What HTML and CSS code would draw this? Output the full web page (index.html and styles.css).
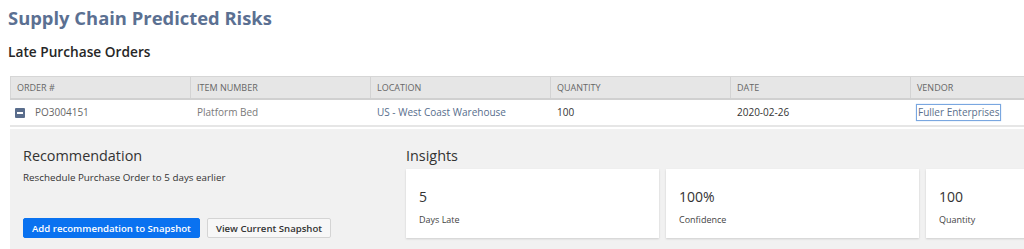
FILE: index.html
```html
<!DOCTYPE html>
<html lang="en">
<head>
    <meta charset="UTF-8">
    <title>Supply Chain Predicted Risks</title>
    <link rel="stylesheet" href="styles.css">
</head>
<body>
    <h1 class="page-title">Supply Chain Predicted Risks</h1>
    <h2 class="section-title">Late Purchase Orders</h2>
    <div class="orders">
        <div class="orders-row orders-head">
            <div class="cell">Order #</div>
            <div class="cell">Item Number</div>
            <div class="cell">Location</div>
            <div class="cell">Quantity</div>
            <div class="cell">Date</div>
            <div class="cell">Vendor</div>
        </div>
        <div class="orders-row orders-body">
            <div class="cell order-id"><span class="toggle"></span>PO3004151</div>
            <div class="cell muted">Platform Bed</div>
            <div class="cell link">US - West Coast Warehouse</div>
            <div class="cell dark">100</div>
            <div class="cell dark">2020-02-26</div>
            <div class="cell"><span class="vendor">Fuller Enterprises</span></div>
        </div>
        <div class="details">
            <div class="recommendation">
                <h3>Recommendation</h3>
                <p>Reschedule Purchase Order to 5 days earlier</p>
                <div class="actions">
                    <button class="btn btn-primary">Add recommendation to Snapshot</button>
                    <button class="btn">View Current Snapshot</button>
                </div>
            </div>
            <div class="insights">
                <h3>Insights</h3>
                <div class="cards">
                    <div class="card">
                        <div class="card-value">5</div>
                        <div class="card-label">Days Late</div>
                    </div>
                    <div class="card">
                        <div class="card-value">100%</div>
                        <div class="card-label">Confidence</div>
                    </div>
                    <div class="card">
                        <div class="card-value">100</div>
                        <div class="card-label">Quantity</div>
                    </div>
                </div>
            </div>
        </div>
    </div>
</body>
</html>
```

FILE: styles.css
```css
body {
    margin: 0;
    padding: 5px 0 0 8px;
    background-color: #fff;
    font-family: "Open Sans", Arial, sans-serif;
    color: #333;
    overflow: hidden;
}
.page-title {
    margin: 0;
    font-size: 18.4px;
    line-height: 26px;
    font-weight: 700;
    color: #5b7092;
}
.section-title {
    margin: 11px 0 0;
    font-size: 13.7px;
    line-height: 20px;
    font-weight: 600;
    color: #262626;
}
.orders {
    margin: 14px 0 0 2px;
    overflow: hidden;
}
.orders-row {
    display: grid;
    grid-template-columns: repeat(6, 180px);
}
.orders-head {
    background-color: #e6e6e6;
    border-top: 1px solid #d6d6d6;
    border-bottom: 2px solid #d0d0d0;
    height: 21px;
}
.orders-head .cell {
    border-left: 1px solid #d3d3d3;
    padding-left: 6px;
    font-size: 9px;
    line-height: 21px;
    text-transform: uppercase;
    color: #666;
}
.orders-head .cell:first-child {
    border-left: 1px solid #d6d6d6;
}
.orders-body {
    height: 25px;
    border-bottom: 2px solid #e6e6e6;
}
.orders-body .cell {
    padding-left: 7px;
    font-size: 10px;
    line-height: 25px;
    color: #666;
    display: flex;
    align-items: center;
}
.orders-body .muted {
    color: #7a7a7a;
}
.orders-body .link {
    color: #566d8c;
}
.orders-body .dark {
    color: #333;
}
.order-id {
    color: #777;
}
.toggle {
    width: 10px;
    height: 10px;
    margin: 0 10px 0 -2px;
    border-radius: 1px;
    background-color: #5a6d8c;
    position: relative;
}
.toggle::after {
    content: "";
    position: absolute;
    left: 2px;
    right: 2px;
    top: 4px;
    height: 2px;
    background-color: #fff;
}
.vendor {
    margin-left: -1px;
    padding: 0 1px;
    border: 1px solid #7aa7e0;
    box-shadow: 0 0 1px #9fc2ee;
    line-height: 15px;
    color: #5b6f8c;
}
.details {
    margin-top: 2px;
    background-color: #f1f1f1;
    height: 125px;
    display: grid;
    grid-template-columns: 383px auto;
    padding-left: 13px;
}
.details h3 {
    margin: 0;
    font-size: 14.4px;
    line-height: 20px;
    font-weight: 400;
    color: #333;
}
.recommendation {
    padding-top: 17px;
}
.recommendation p {
    margin: 5px 0 0;
    font-size: 9.8px;
    line-height: 14px;
    color: #333;
}
.actions {
    display: flex;
    gap: 7px;
    margin-top: 33px;
}
.btn {
    font-family: "Open Sans", Arial, sans-serif;
    font-size: 9.6px;
    font-weight: 600;
    height: 20px;
    padding: 0 8px;
    border: 1px solid #d4d4d4;
    border-radius: 2px;
    background-color: #f7f7f7;
    color: #333;
}
.btn-primary {
    background-color: #0a72f0;
    border-color: #0a72f0;
    color: #fff;
}
.insights {
    padding-top: 17px;
}
.cards {
    display: flex;
    gap: 7px;
    margin-top: 3px;
}
.card {
    flex: 0 0 253px;
    height: 69px;
    background-color: #fff;
    box-shadow: 0 1px 2px rgba(0, 0, 0, 0.15);
    padding: 19px 0 0 13px;
    box-sizing: border-box;
}
.card-value {
    font-size: 14px;
    line-height: 18px;
    color: #333;
}
.card-label {
    margin-top: 8px;
    font-size: 9px;
    line-height: 12px;
    color: #444;
}
```
